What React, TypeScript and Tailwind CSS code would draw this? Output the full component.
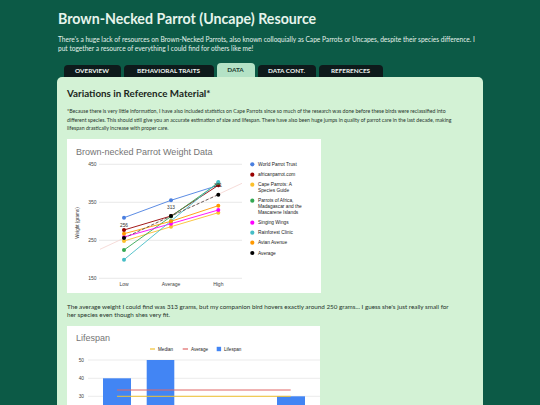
import React from 'react';

type Series = { name: string[]; color: string; pts: [number, number, number]; dashed?: boolean };

const X = [57, 104, 151.3];

const series: Series[] = [
  { name: ['World Parrot Trust'], color: '#4a7fe0', pts: [78.7, 61.3, 46.3] },
  { name: ['africanparrot.com'], color: '#990000', pts: [91, 77, 46.3] },
  { name: ['Cape Parrots: A', 'Species Guide'], color: '#fbc02d', pts: [102, 87.7, 73.7] },
  { name: ['Parrots of Africa,', 'Madagascar and the', 'Mascarene Islands'], color: '#34a853', pts: [111, 77.5, 44] },
  { name: ['Singing Wings'], color: '#ff00ff', pts: [98, 84.7, 71] },
  { name: ['Rainforest Clinic'], color: '#46bdc6', pts: [120.7, 82, 43] },
  { name: ['Avian Avenue'], color: '#ff9900', pts: [94.7, 82.3, 66.7] },
  { name: ['Average'], color: '#000000', pts: [99, 77, 55.7], dashed: true },
];

const tabs = [
  { label: 'OVERVIEW', w: 'w-[57px]' },
  { label: 'BEHAVIORAL TRAITS', w: 'w-[90px]' },
  { label: 'DATA', w: 'w-[38px]', active: true },
  { label: 'DATA CONT.', w: 'w-[58px]' },
  { label: 'REFERENCES', w: 'w-[64px]' },
];

function WeightChart() {
  const grid = [
    { label: '450', y: 25.3 },
    { label: '350', y: 63.3 },
    { label: '250', y: 101.3 },
    { label: '150', y: 139.3 },
  ];
  // legend rows: y of first line for each entry
  const legendY = [25.3, 35.7, 45.7, 61.7, 83.7, 93.7, 103.7, 114];
  return (
    <svg width="254" height="154" viewBox="0 0 254 154" className="block" fontFamily="'Liberation Sans', Arial, sans-serif">
      <text x="9" y="16" fontSize="9" fill="#757575">Brown-necked Parrot Weight Data</text>
      {grid.map((g) => (
        <g key={g.label}>
          <line x1="32" x2="175" y1={g.y} y2={g.y} stroke="#e3e3e3" strokeWidth="0.8" />
          <text x="29.5" y={g.y + 1.8} fontSize="5" fill="#444" textAnchor="end">{g.label}</text>
        </g>
      ))}
      <text x="11" y="84" fontSize="4.6" fill="#333" textAnchor="middle" transform="rotate(-90 11 84)" dominantBaseline="middle">Weight (grams)</text>
      {['Low', 'Average', 'High'].map((l, i) => (
        <text key={l} x={X[i]} y="146.5" fontSize="5" fill="#444" textAnchor="middle">{l}</text>
      ))}
      <line x1="33" y1="110.3" x2="175" y2="44.3" stroke="#f4d3cf" strokeWidth="0.8" />
      {series.map((s) => (
        <g key={s.color}>
          <polyline
            points={s.pts.map((p, i) => `${X[i]},${p}`).join(' ')}
            fill="none"
            stroke={s.dashed ? '#555' : s.color}
            strokeWidth="0.9"
            strokeDasharray={s.dashed ? '3 2' : undefined}
          />
          {s.pts.map((p, i) => (
            <circle key={i} cx={X[i]} cy={p} r="2" fill={s.color} />
          ))}
        </g>
      ))}
      <text x="57" y="88" fontSize="4.8" fill="#333" textAnchor="middle">256</text>
      <text x="104" y="69.5" fontSize="4.8" fill="#333" textAnchor="middle">313</text>
      <text x="151" y="48" fontSize="4.8" fill="#333" textAnchor="middle">371</text>
      {series.map((s, i) => (
        <g key={s.name[0]}>
          <circle cx="185.3" cy={legendY[i]} r="2.1" fill={s.color} />
          {s.name.map((n, j) => (
            <text key={n} x="191" y={legendY[i] + 1.7 + j * 6} fontSize="4.8" fill="#222">{n}</text>
          ))}
        </g>
      ))}
    </svg>
  );
}

function LifespanChart() {
  const grid = [
    { label: '50', y: 34 },
    { label: '40', y: 52.3 },
    { label: '30', y: 70.3 },
    { label: '20', y: 88.3 },
  ];
  return (
    <svg width="253" height="100" viewBox="0 0 253 100" className="block" fontFamily="'Liberation Sans', Arial, sans-serif">
      <text x="9" y="14.5" fontSize="9" fill="#757575">Lifespan</text>
      <line x1="83" x2="88" y1="23" y2="23" stroke="#f1c232" strokeWidth="1.2" />
      <text x="91" y="24.7" fontSize="4.6" fill="#222">Median</text>
      <line x1="115.7" x2="121" y1="23" y2="23" stroke="#e06666" strokeWidth="1.2" />
      <text x="124" y="24.7" fontSize="4.6" fill="#222">Average</text>
      <rect x="149.7" y="20.8" width="4.4" height="4.4" fill="#4285f4" />
      <text x="157" y="24.7" fontSize="4.6" fill="#222">Lifespan</text>
      {grid.map((g) => (
        <g key={g.label}>
          <line x1="21" x2="253" y1={g.y} y2={g.y} stroke="#e6e6e6" strokeWidth="0.8" />
          <text x="17" y={g.y + 1.7} fontSize="4.8" fill="#444" textAnchor="end">{g.label}</text>
        </g>
      ))}
      <rect x="36" y="52.3" width="28" height="60" fill="#4285f4" />
      <rect x="79.7" y="34" width="27.6" height="80" fill="#4285f4" />
      <rect x="210" y="70.3" width="28" height="40" fill="#4285f4" />
      <line x1="50" x2="223.7" y1="64" y2="64" stroke="#e06666" strokeWidth="1" />
      <line x1="50" x2="223.7" y1="70.3" y2="70.3" stroke="#f1c232" strokeWidth="1" />
    </svg>
  );
}

export default function App() {
  return (
    <div className="min-h-screen bg-[#0c5a46] font-['Lato','Open_Sans',sans-serif]">
      <div className="px-[57px] pt-[9px]">
        <h1 className="text-[14.2px] font-bold leading-[20px] text-[#e6f4ec] pl-[1px]">
          Brown-Necked Parrot (Uncape) Resource
        </h1>
        <p className="mt-[6px] pl-[1px] text-[6.6px] leading-[9px] text-[#e3f1ea]">
          There's a huge lack of resources on Brown-Necked Parrots, also known colloquially as Cape Parrots or Uncapes, despite their species difference. I
          <br />
          put together a resource of everything I could find for others like me!
        </p>

        <div className="mt-[10px] flex items-end gap-[3px] pl-[6.5px]">
          {tabs.map((t) => (
            <div
              key={t.label}
              className={
                t.active
                  ? `${t.w} h-[14px] rounded-t-[4px] bg-[#b4e2c6] text-[#1b3a2e] flex items-center justify-center text-[6.4px] font-bold`
                  : `${t.w} h-[12px] rounded-t-[4px] bg-[#0e1a1b] text-[#eef5f2] flex items-center justify-center text-[6.4px] font-bold`
              }
            >
              {t.label}
            </div>
          ))}
        </div>

        <div className="rounded-t-[5px] bg-[#d3f2d5] px-[10px] pt-[10px] pb-[20px] text-[#1c2a22]">
          <h2 className="text-[9.8px] font-bold leading-[13px] text-[#1a2620]">Variations in Reference Material*</h2>
          <p className="mt-[7px] text-[5.2px] leading-[8.5px] text-[#26342c]">
            *Because there is very little information, I have also included statistics on Cape Parrots since so much of the research was done before these birds were reclassified into
            <br />
            different species. This should still give you an accurate estimation of size and lifespan. There have also been huge jumps in quality of parrot care in the last decade, making
            <br />
            lifespan drastically increase with proper care.
          </p>

          <div className="mt-[6px] w-[254px] bg-white">
            <WeightChart />
          </div>

          <p className="mt-[10px] text-[6.3px] font-normal leading-[8.5px] text-[#26342c]">
            The average weight I could find was 313 grams, but my companion bird hovers exactly around 250 grams... I guess she's just really small for
            <br />
            her species even though shes very fit.
          </p>

          <div className="mt-[6px] w-[253px] bg-white">
            <LifespanChart />
          </div>
        </div>
      </div>
    </div>
  );
}
